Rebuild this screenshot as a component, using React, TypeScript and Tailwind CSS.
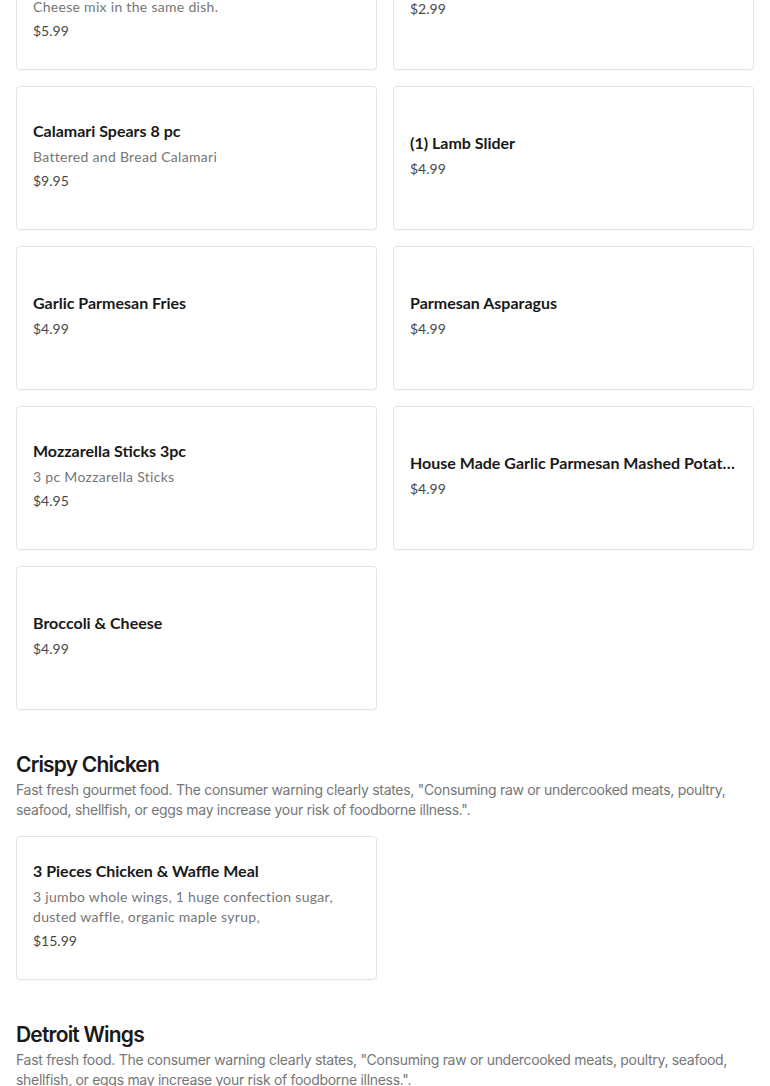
type Item = {
  title: string;
  desc?: string[];
  price: string;
};

const appetizers: Item[] = [
  {
    title: "Spinach Artichoke Dip",
    desc: ["Creamy spinach and artichoke with Parmesan", "Cheese mix in the same dish."],
    price: "$5.99",
  },
  { title: "Side of Seasoned Fries", price: "$2.99" },
  { title: "Calamari Spears 8 pc", desc: ["Battered and Bread Calamari"], price: "$9.95" },
  { title: "(1) Lamb Slider", price: "$4.99" },
  { title: "Garlic Parmesan Fries", price: "$4.99" },
  { title: "Parmesan Asparagus", price: "$4.99" },
  { title: "Mozzarella Sticks 3pc", desc: ["3 pc Mozzarella Sticks"], price: "$4.95" },
  { title: "House Made Garlic Parmesan Mashed Potatoes", price: "$4.99" },
  { title: "Broccoli & Cheese", price: "$4.99" },
];

const chicken: Item[] = [
  {
    title: "3 Pieces Chicken & Waffle Meal",
    desc: ["3 jumbo whole wings, 1 huge confection sugar,", "dusted waffle, organic maple syrup,"],
    price: "$15.99",
  },
];

function MenuCard({ item }: { item: Item }) {
  return (
    <div className="flex h-[144px] flex-col justify-center rounded-[4px] border border-[#e4e4e4] bg-white px-4 pb-[6px] font-['Lato',sans-serif] shadow-[0_1px_1px_rgba(0,0,0,0.03)]">
      <div className="truncate text-[16px] font-bold leading-6 text-[#191919]">{item.title}</div>
      {item.desc && (
        <div className="mt-1 text-[14px] leading-5 tracking-[0.3px] text-[#767676]">
          {item.desc.map((line) => (
            <div key={line}>{line}</div>
          ))}
        </div>
      )}
      <div className="mt-1 text-[14px] leading-5 text-[#494949]">{item.price}</div>
    </div>
  );
}

function Section({ name, blurb, items }: { name: string; blurb: string; items: Item[] }) {
  return (
    <section className="mt-10">
      <h2 className="text-[21px] font-semibold leading-[30px] tracking-[-0.8px] text-[#191919]">{name}</h2>
      <p className="text-[14px] leading-5 tracking-[-0.3px] text-[#767676]">{blurb}</p>
      <div className="mt-4 grid grid-cols-2 gap-4">
        {items.map((item) => (
          <MenuCard key={item.title} item={item} />
        ))}
      </div>
    </section>
  );
}

export default function App() {
  return (
    <div className="min-h-screen overflow-hidden bg-white px-4 font-['Inter',sans-serif]">
      <div className="-mt-[74px] grid grid-cols-2 gap-4">
        {appetizers.map((item) => (
          <MenuCard key={item.title} item={item} />
        ))}
      </div>

      <Section
        name="Crispy Chicken"
        blurb={'Fast fresh gourmet food. The consumer warning clearly states, "Consuming raw or undercooked meats, poultry, seafood, shellfish, or eggs may increase your risk of foodborne illness.".'}
        items={chicken}
      />

      <Section
        name="Detroit Wings"
        blurb={'Fast fresh food. The consumer warning clearly states, "Consuming raw or undercooked meats, poultry, seafood, shellfish, or eggs may increase your risk of foodborne illness.".'}
        items={[]}
      />
    </div>
  );
}
